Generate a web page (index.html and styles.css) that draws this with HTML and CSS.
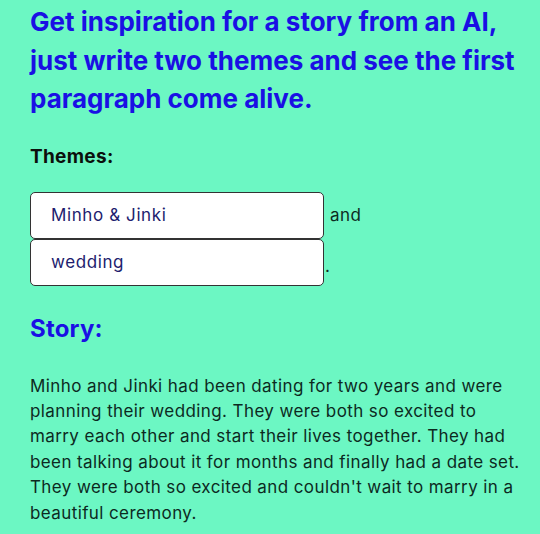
FILE: index.html
```html
<!DOCTYPE html>
<html lang="en">
<head>
  <meta charset="UTF-8">
  <meta name="viewport" content="width=device-width, initial-scale=1.0">
  <title>Story Generator</title>
  <link rel="stylesheet" href="styles.css">
</head>
<body>
  <div class="page">
    <h1 class="intro">Get inspiration for a story from an AI, just write two themes and see the first paragraph come alive.</h1>
    <h3 class="label">Themes:</h3>
    <div class="themes">
      <div class="theme-row">
        <input class="theme-input" type="text" value="Minho &amp; Jinki">
        <span class="joiner">and</span>
      </div>
      <div class="theme-row">
        <input class="theme-input" type="text" value="wedding">
        <span class="joiner dot">.</span>
      </div>
    </div>
    <h2 class="story-title">Story:</h2>
    <p class="story">Minho and Jinki had been dating for two years and were planning their wedding. They were both so excited to marry each other and start their lives together. They had been talking about it for months and finally had a date set. They were both so excited and couldn't wait to marry in a beautiful ceremony.</p>
  </div>
</body>
</html>
```

FILE: styles.css
```css
body {
  margin: 0;
  background: #6cf7c3;
  font-family: Inter, "Liberation Sans", sans-serif;
  color: #0c2a1f;
}
.page {
  padding: 0 15px 0 30px;
}
.intro {
  margin: 3px 0 0;
  font-size: 26px;
  line-height: 38.5px;
  font-weight: 700;
  color: #1a10e4;
}
.label {
  margin: 25px 0 0;
  font-size: 19px;
  line-height: 26px;
  font-weight: 700;
  color: #0b0f0c;
  letter-spacing: 0.3px;
}
.themes {
  margin-top: 22px;
}
.theme-row {
  display: flex;
  align-items: center;
}
.theme-input {
  box-sizing: border-box;
  width: 294px;
  height: 47px;
  margin: 0;
  padding: 0 20px;
  border: 1px solid #333;
  border-radius: 5px;
  background: #fff;
  font-family: Inter, "Liberation Sans", sans-serif;
  font-size: 17px;
  letter-spacing: 0.6px;
  color: #211c6e;
}
.joiner {
  margin-left: 6px;
  font-size: 17px;
  letter-spacing: 0.4px;
  color: #0c2a1f;
}
.dot {
  align-self: flex-end;
  margin-left: 1px;
  margin-bottom: 10px;
}
.story-title {
  margin: 26px 0 0;
  font-size: 24px;
  line-height: 34px;
  font-weight: 700;
  color: #1a10e4;
  letter-spacing: 0.2px;
}
.story {
  margin: 28px 0 0;
  font-size: 17px;
  line-height: 25.4px;
  letter-spacing: 0.4px;
  color: #0c2a1f;
}
```
